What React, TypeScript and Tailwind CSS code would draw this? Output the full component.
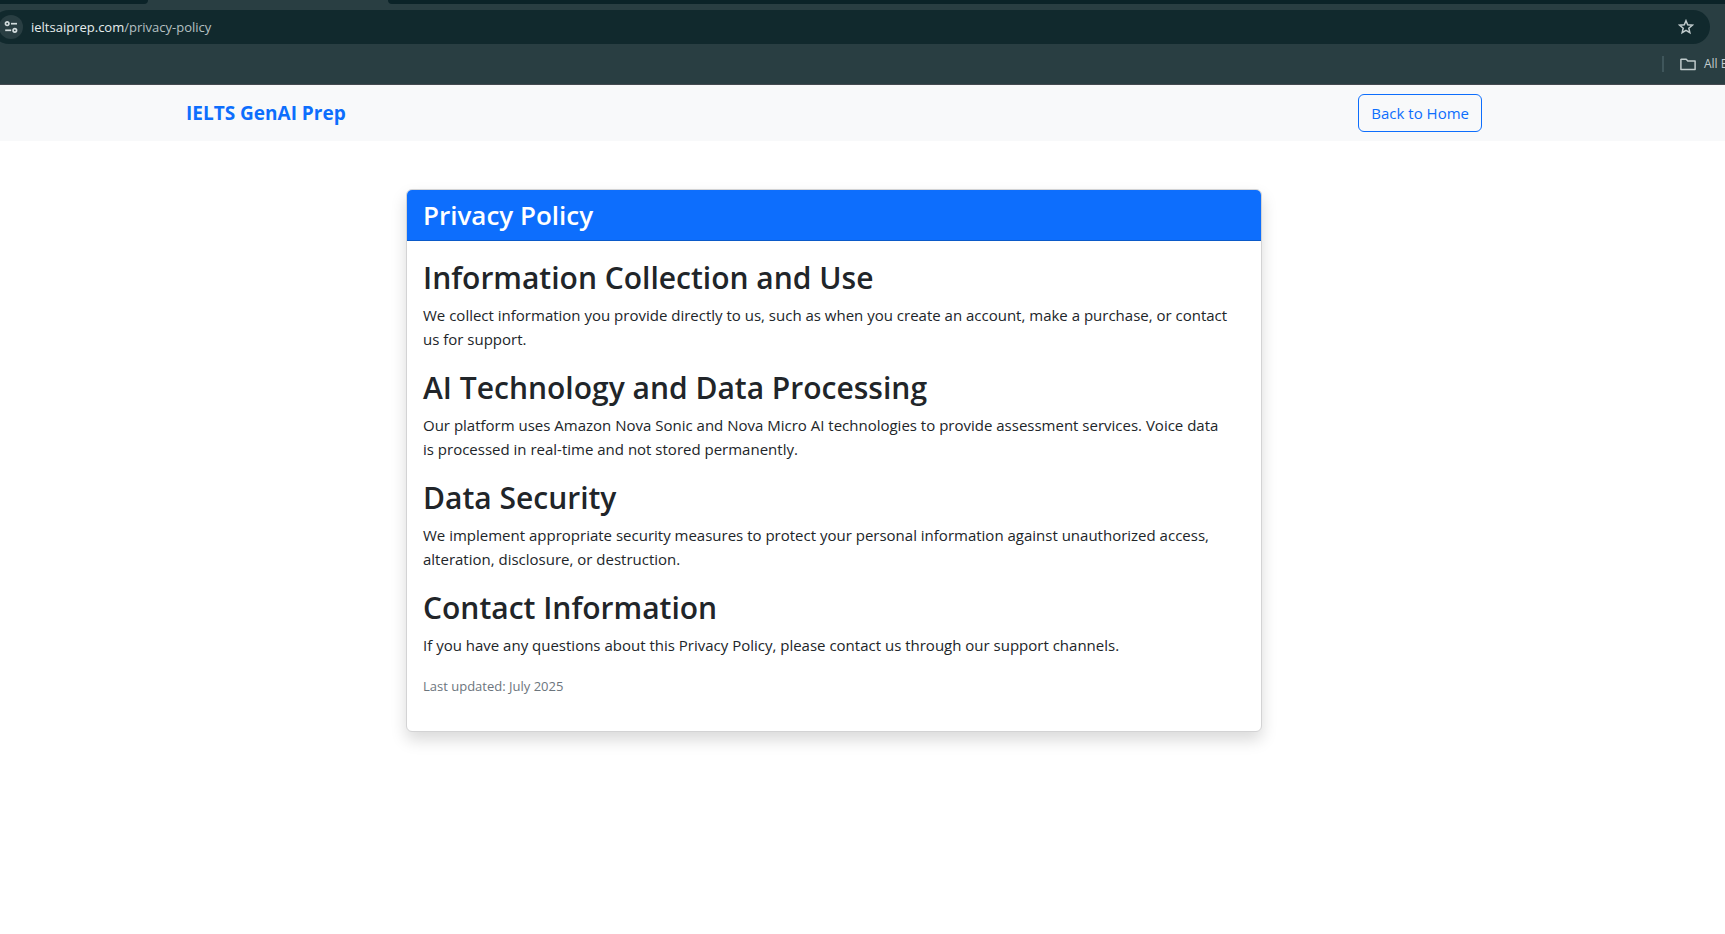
const sections = [
  {
    title: 'Information Collection and Use',
    body: 'We collect information you provide directly to us, such as when you create an account, make a purchase, or contact us for support.',
  },
  {
    title: 'AI Technology and Data Processing',
    body: 'Our platform uses Amazon Nova Sonic and Nova Micro AI technologies to provide assessment services. Voice data is processed in real-time and not stored permanently.',
  },
  {
    title: 'Data Security',
    body: 'We implement appropriate security measures to protect your personal information against unauthorized access, alteration, disclosure, or destruction.',
  },
  {
    title: 'Contact Information',
    body: 'If you have any questions about this Privacy Policy, please contact us through our support channels.',
  },
];

function SiteSettingsIcon() {
  return (
    <svg width="14" height="14" viewBox="0 0 14 14" fill="none" stroke="#d3dcdd" strokeWidth="1.7" aria-hidden="true">
      <circle cx="3.2" cy="3.7" r="1.75" />
      <path d="M7 3.7h6" />
      <path d="M1.2 10.3h6" />
      <circle cx="10.8" cy="10.3" r="1.75" />
    </svg>
  );
}

function StarIcon() {
  return (
    <svg width="16" height="16" viewBox="0 0 16 16" fill="none" stroke="#c0cbcc" strokeWidth="1.5" aria-hidden="true">
      <path d="M8 1.7l1.7 4.1 4.6.4-3.5 3 1.05 4.4L8 11.3l-3.85 2.3L5.2 9.2l-3.5-3 4.6-.4z" />
    </svg>
  );
}

function FolderIcon() {
  return (
    <svg width="16" height="13" viewBox="0 0 16 13" fill="none" stroke="#c0cbcc" strokeWidth="1.5" strokeLinejoin="round" aria-hidden="true">
      <path d="M.9 1.5v9.9h14.2V2.9H7.8L6.2 1.2H1.2z" />
    </svg>
  );
}

function BrowserBar() {
  return (
    <header className="overflow-hidden border-b border-[#444a50] bg-[#293e42]">
      <div className="flex h-1">
        <div className="w-[148px] rounded-br-lg bg-[#0b2328]" />
        <div className="w-[240px]" />
        <div className="flex-1 rounded-bl-lg bg-[#0b2328]" />
      </div>
      <div className="mt-1.5 -ml-2 mr-[15px] flex h-[34px] items-center rounded-full bg-[#11292d] pr-4 pl-[7px]">
        <button type="button" aria-label="View site information" className="flex size-6 shrink-0 items-center justify-center rounded-full bg-[#293e42]">
          <SiteSettingsIcon />
        </button>
        <label className="ml-2 flex flex-1 text-[13px] leading-5">
          <span className="text-[#e6eded]">ieltsaiprep.com</span>
          <input
            type="text"
            aria-label="Address"
            defaultValue="/privacy-policy"
            className="min-w-0 flex-1 bg-transparent p-0 text-[#b5c0c2] outline-none"
          />
        </label>
        <button type="button" aria-label="Bookmark this page">
          <StarIcon />
        </button>
      </div>
      <div className="flex h-10 items-center justify-end">
        <div className="mr-4 h-4 w-0.5 bg-[#3f565b]" />
        <button type="button" className="flex w-[45px] items-center gap-2 overflow-hidden text-xs whitespace-nowrap text-[#c3cdce]">
          <span className="shrink-0">
            <FolderIcon />
          </span>
          All Bookmarks
        </button>
      </div>
    </header>
  );
}

export default function App() {
  return (
    <div className="min-h-screen bg-white font-['Open_Sans','Noto_Sans',sans-serif] text-[15px] leading-6 text-[#212529]">
      <BrowserBar />
      <nav className="bg-[#f8f9fa] py-2 pr-[57px]">
        <div className="mx-auto flex max-w-[1320px] items-center justify-between px-3">
          <a href="/" className="text-[19px] leading-10 font-bold text-[#0d6efd]">
            IELTS GenAI Prep
          </a>
          <a href="/" className="rounded-md border border-[#0d6efd] px-3 py-1.5 text-[#0d6efd]">
            Back to Home
          </a>
        </div>
      </nav>
      <main className="py-12 pr-[57px]">
        <article className="mx-auto max-w-[856px] rounded-md border border-[#d3d3d4] bg-white shadow-[0_8px_16px_rgba(0,0,0,0.15)]">
          <div className="rounded-t-[5px] border-b border-[#0b5ac9] bg-[#0d6efd] px-4 py-2">
            <h1 className="text-[26px] leading-[34px] font-semibold text-white">Privacy Policy</h1>
          </div>
          <div className="p-4">
            {sections.map((section) => (
              <section key={section.title} className="mb-4">
                <h2 className="mb-1 text-[30px] leading-[42px] font-semibold">{section.title}</h2>
                <p className="pr-3.5">{section.body}</p>
              </section>
            ))}
            <p className="mb-4 text-[13px] leading-[26px] text-[#6c757d]">Last updated: July 2025</p>
          </div>
        </article>
      </main>
    </div>
  );
}
